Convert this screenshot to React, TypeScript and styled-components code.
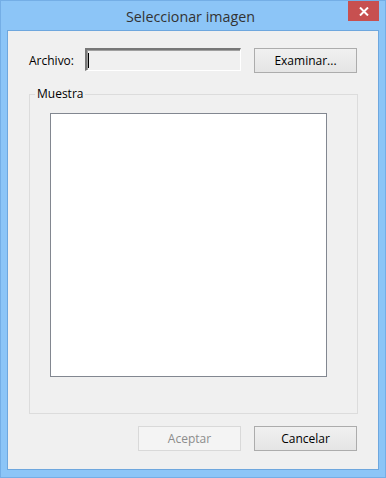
import React from "react";
import styled, { createGlobalStyle } from "styled-components";

const GlobalStyle = createGlobalStyle`
  html, body {
    margin: 0;
    padding: 0;
    width: 386px;
    height: 478px;
    overflow: hidden;
  }
`;

const Frame = styled.div`
  box-sizing: border-box;
  width: 386px;
  height: 478px;
  background: #8cc5f7;
  border: 1px solid #74aee6;
  display: flex;
  flex-direction: column;
  font-family: "Open Sans", "Noto Sans", sans-serif;
  font-size: 12px;
  color: #000;
`;

const TitleBar = styled.div`
  position: relative;
  height: 29px;
  display: flex;
  align-items: center;
  justify-content: center;
`;

const Title = styled.span`
  font-size: 14.3px;
  color: #333;
  margin-left: -5px;
  margin-top: 1px;
`;

const CloseButton = styled.div`
  position: absolute;
  top: 0;
  right: 6px;
  width: 31px;
  height: 20px;
  background: #c75050;
  display: flex;
  align-items: center;
  justify-content: center;
`;

const Client = styled.div`
  flex: 1;
  margin: 0 6px 7px 6px;
  border: 1px solid #6ea7de;
  background: #f0f0f0;
  display: flex;
  flex-direction: column;
  padding: 17px 20px 0 21px;
`;

const FileRow = styled.div`
  display: flex;
  align-items: center;
  height: 24px;
`;

const Label = styled.span`
  width: 56px;
`;

const FileInput = styled.div`
  box-sizing: border-box;
  width: 156px;
  height: 23px;
  margin-top: -1px;
  background: #f0f0f0;
  border-top: 2px solid #777;
  border-left: 2px solid #777;
  border-right: 1px solid #fff;
  border-bottom: 1px solid #fff;
  box-shadow: inset 1px 1px 0 #a0a0a0;
  display: flex;
  align-items: center;
  padding-left: 1px;
`;

const Caret = styled.div`
  width: 1px;
  height: 15px;
  background: #000;
`;

const Button = styled.div<{ $disabled?: boolean }>`
  box-sizing: border-box;
  width: 103px;
  height: 25px;
  margin-left: 13px;
  border: 1px solid ${(p) => (p.$disabled ? "#d9d9d9" : "#acacac")};
  background: ${(p) =>
    p.$disabled ? "#f4f4f4" : "linear-gradient(#f0f0f0, #e5e5e5)"};
  color: ${(p) => (p.$disabled ? "#8c8c8c" : "#000")};
  display: flex;
  align-items: center;
  justify-content: center;
`;

const GroupBox = styled.fieldset`
  box-sizing: border-box;
  width: 329px;
  height: 327px;
  margin: 15px 0 0 0;
  padding: 0;
  border: 1px solid #dcdcdc;
  display: flex;
  flex-direction: column;

  legend {
    padding: 0 2px;
    margin-left: 5px;
    line-height: 14px;
  }
`;

const Preview = styled.div`
  box-sizing: border-box;
  width: 277px;
  height: 264px;
  margin: 12px 0 0 20px;
  background: #fff;
  border: 1px solid #828790;
`;

const ButtonRow = styled.div`
  display: flex;
  justify-content: flex-end;
  width: 328px;
  margin-top: 12px;
`;

export default function App() {
  return (
    <>
      <GlobalStyle />
      <Frame>
        <TitleBar>
          <Title>Seleccionar imagen</Title>
          <CloseButton>
            <svg width="10" height="9" viewBox="0 0 10 9">
              <path d="M1 0.5 L9 8.5 M9 0.5 L1 8.5" stroke="#fff" strokeWidth="2" />
            </svg>
          </CloseButton>
        </TitleBar>
        <Client>
          <FileRow>
            <Label>Archivo:</Label>
            <FileInput>
              <Caret />
            </FileInput>
            <Button>Examinar...</Button>
          </FileRow>
          <GroupBox>
            <legend>Muestra</legend>
            <Preview />
          </GroupBox>
          <ButtonRow>
            <Button $disabled>Aceptar</Button>
            <Button>Cancelar</Button>
          </ButtonRow>
        </Client>
      </Frame>
    </>
  );
}
